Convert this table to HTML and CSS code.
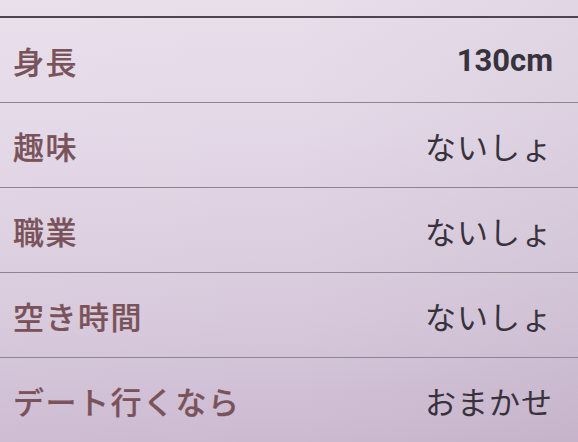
FILE: index.html
```html
<!DOCTYPE html>
<html lang="ja">
<head>
<meta charset="utf-8">
<title>プロフィール</title>
<link rel="stylesheet" href="styles.css">
</head>
<body>
<div class="screen">
  <div class="top-space"></div>
  <ul class="profile-list">
    <li class="row"><span class="label">身長</span><span class="value value-num">130cm</span></li>
    <li class="row"><span class="label">趣味</span><span class="value">ないしょ</span></li>
    <li class="row"><span class="label">職業</span><span class="value">ないしょ</span></li>
    <li class="row"><span class="label">空き時間</span><span class="value">ないしょ</span></li>
    <li class="row"><span class="label">デート行くなら</span><span class="value">おまかせ</span></li>
  </ul>
</div>
</body>
</html>
```
FILE: styles.css
```css
html, body {
  margin: 0;
  padding: 0;
}
body {
  width: 578px;
  height: 442px;
  overflow: hidden;
  font-family: "Noto Sans CJK JP", "Noto Sans", sans-serif;
}
.screen {
  width: 578px;
  height: 442px;
  background:
    linear-gradient(90deg, rgba(255,255,255,0.04) 0%, rgba(0,0,0,0) 50%, rgba(40,20,50,0.04) 100%),
    linear-gradient(180deg, #e8dfeb 0%, #e3d8e7 30%, #d8cadc 70%, #ccbad1 100%);
}
.top-space {
  height: 16px;
  border-bottom: 2px solid #4e4554;
}
.profile-list {
  list-style: none;
  margin: 0;
  padding: 0;
}
.row {
  height: 84px;
  display: flex;
  align-items: center;
  justify-content: space-between;
  padding: 0 25px 0 13px;
  border-bottom: 1px solid #8d8592;
}
.label {
  font-size: 31px;
  font-weight: 500;
  color: #7a5259;
  letter-spacing: 1.5px;
  -webkit-text-stroke: 0.2px #7a5259;
}
.value {
  font-size: 31px;
  font-weight: 400;
  color: #38323d;
  letter-spacing: 1px;
}
.value-num {
  font-family: "Roboto", "Noto Sans", sans-serif;
  font-weight: 700;
  font-size: 31px;
  letter-spacing: 0;
}
```
